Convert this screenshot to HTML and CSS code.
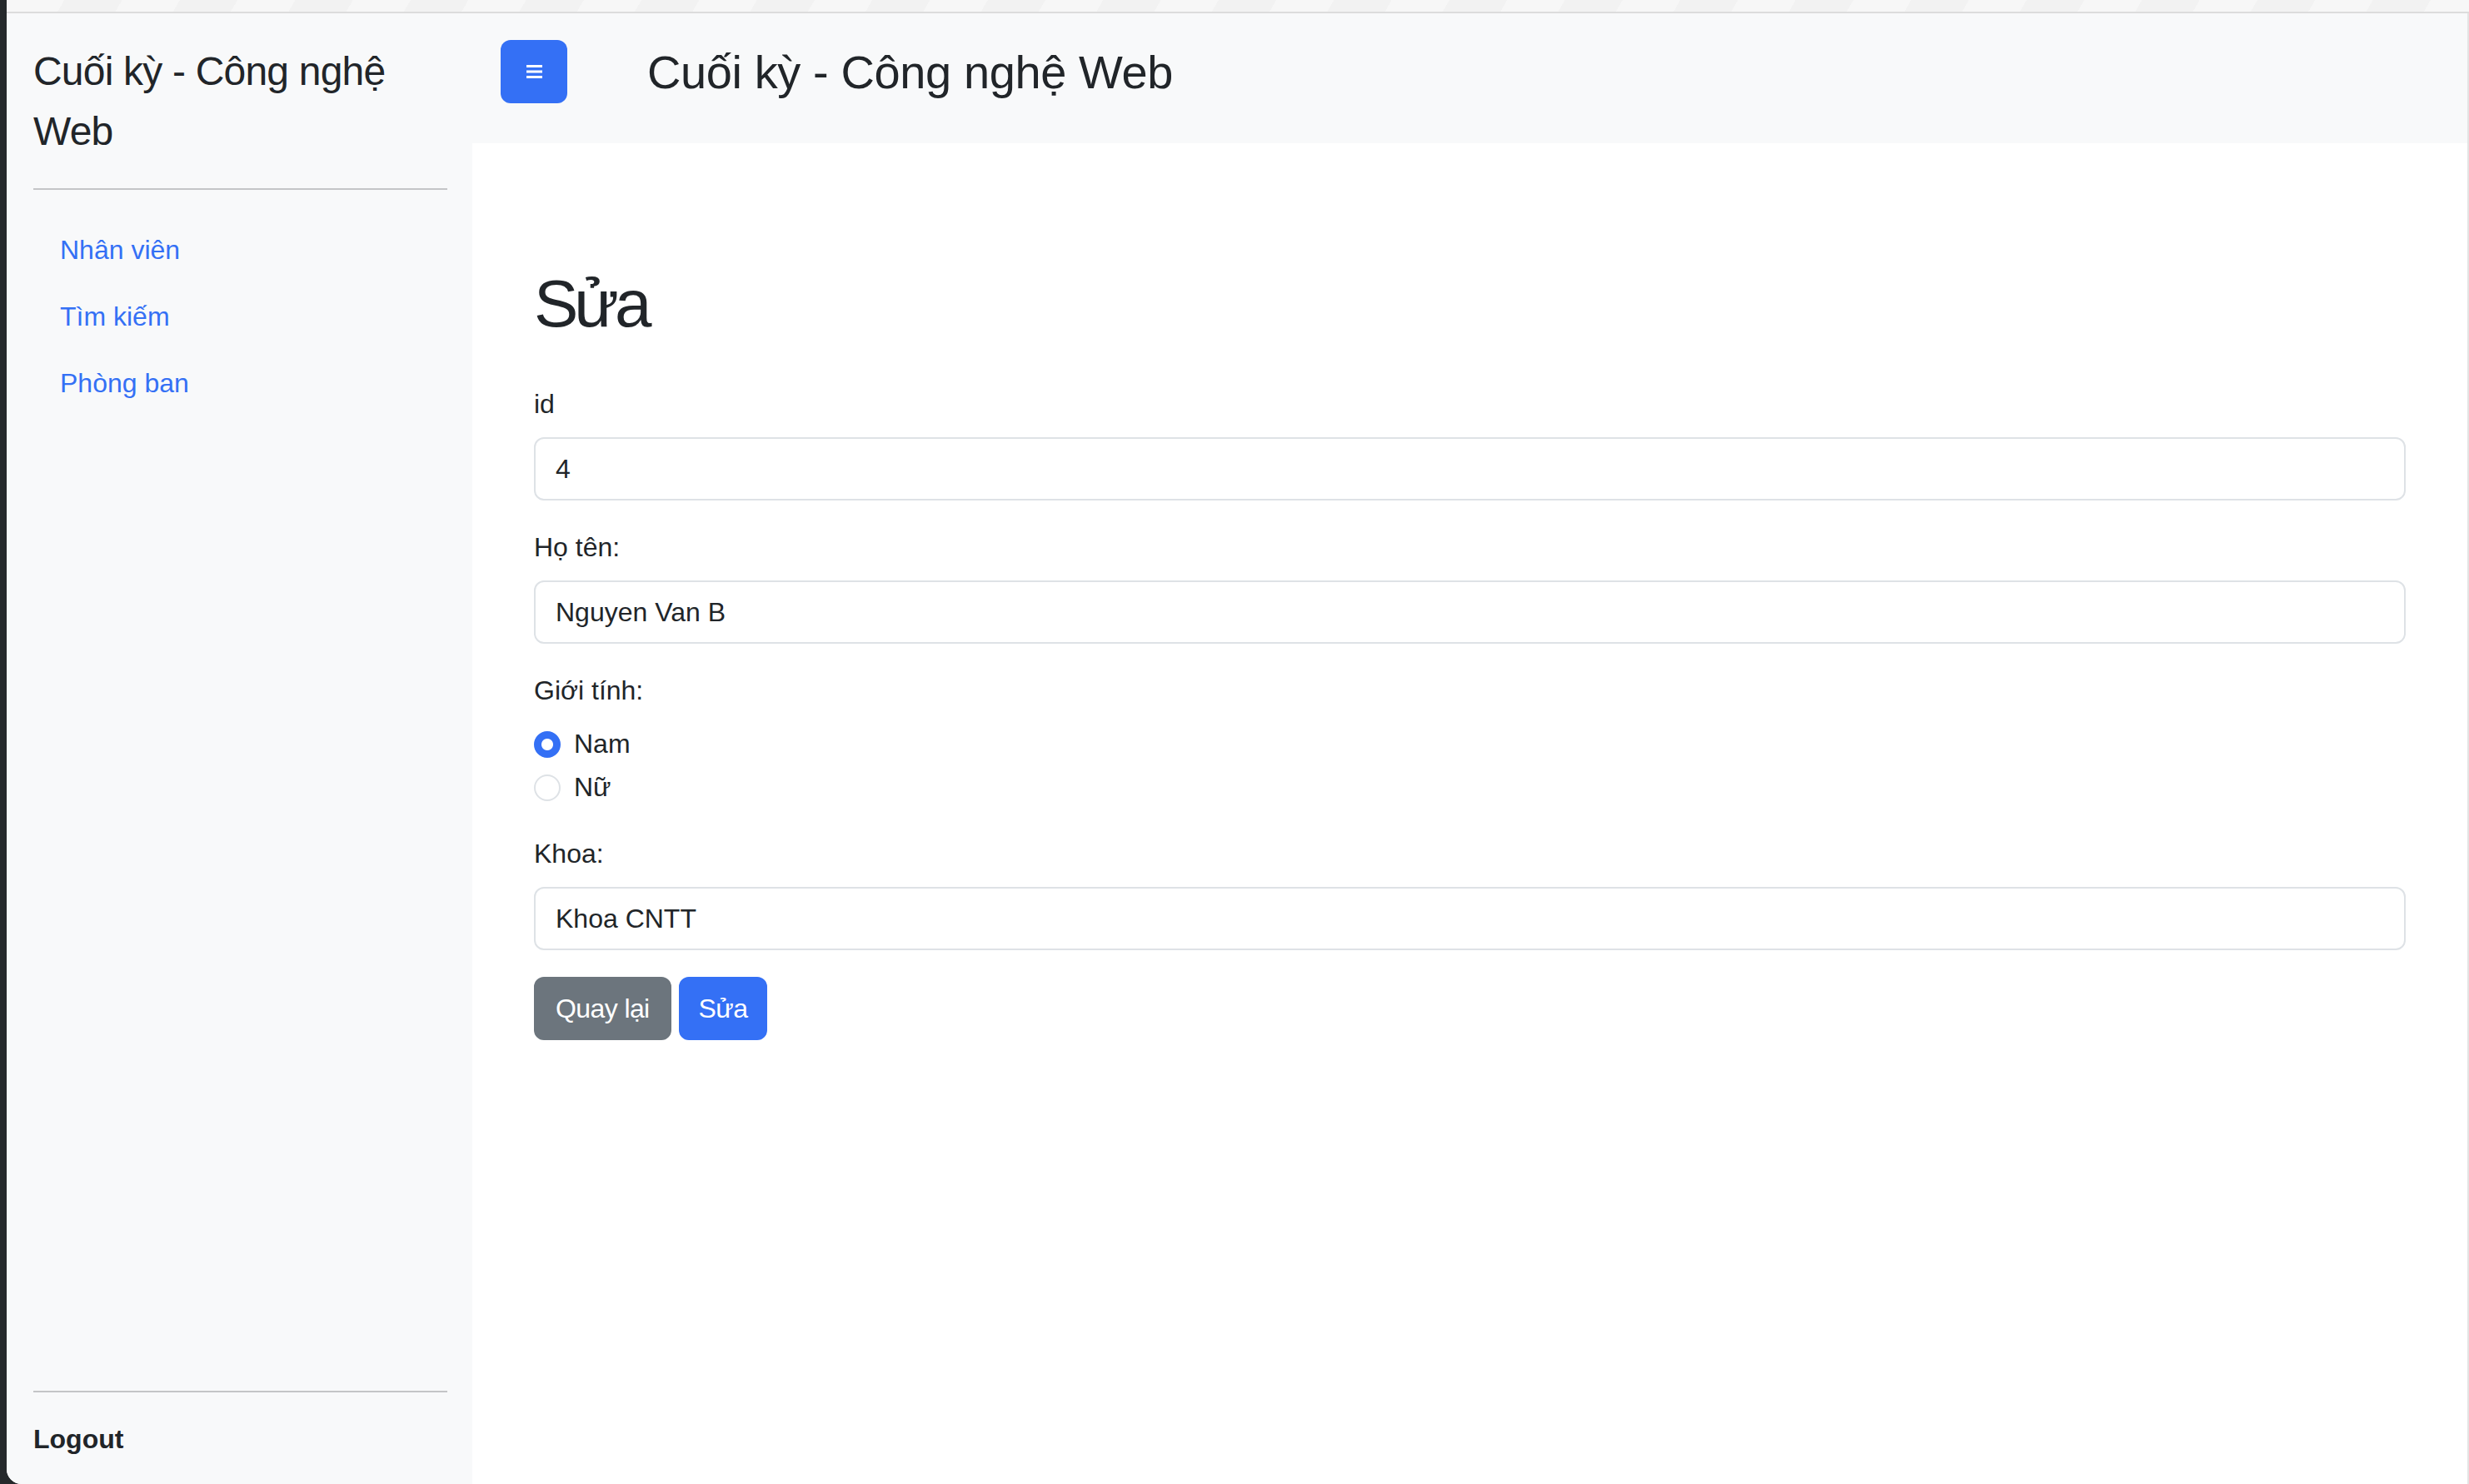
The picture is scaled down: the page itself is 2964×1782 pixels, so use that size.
FILE: index.html
```html
<!DOCTYPE html>
<html lang="vi">
<head>
<meta charset="utf-8">
<title>Cuối kỳ - Công nghệ Web</title>
<link rel="stylesheet" href="styles.css">
</head>
<body>
<div class="frame">
  <div class="titlebar"></div>
  <div class="app">
    <aside class="sidebar">
      <a class="brand" href="#">Cuối kỳ - Công nghệ Web</a>
      <hr class="divider">
      <nav class="nav">
        <a class="nav-link" href="#">Nhân viên</a>
        <a class="nav-link" href="#">Tìm kiếm</a>
        <a class="nav-link" href="#">Phòng ban</a>
      </nav>
      <div class="sidebar-foot">
        <hr class="divider">
        <a class="logout" href="#">Logout</a>
      </div>
    </aside>
    <main class="main">
      <header class="topbar">
        <button class="menu-btn" type="button" aria-label="Menu">
          <svg class="menu-icon" width="19" height="16" viewBox="0 0 19 16">
            <rect x="0" y="0" width="19" height="3" fill="#fff"/>
            <rect x="0" y="6.5" width="19" height="3" fill="#fff"/>
            <rect x="0" y="13" width="19" height="3" fill="#fff"/>
          </svg>
        </button>
        <h3 class="topbar-title">Cuối kỳ - Công nghệ Web</h3>
      </header>
      <section class="content">
        <h1 class="page-title">Sửa</h1>
        <form class="form">
          <div class="field">
            <label class="label" for="f-id">id</label>
            <input class="input" id="f-id" type="text" value="4">
          </div>
          <div class="field">
            <label class="label" for="f-name">Họ tên:</label>
            <input class="input" id="f-name" type="text" value="Nguyen Van B">
          </div>
          <div class="field">
            <label class="label">Giới tính:</label>
            <div class="check">
              <input class="radio" type="radio" name="gt" id="gt-nam" checked>
              <label class="check-label" for="gt-nam">Nam</label>
            </div>
            <div class="check">
              <input class="radio" type="radio" name="gt" id="gt-nu">
              <label class="check-label" for="gt-nu">Nữ</label>
            </div>
          </div>
          <div class="field">
            <label class="label" for="f-khoa">Khoa:</label>
            <input class="input" id="f-khoa" type="text" value="Khoa CNTT">
          </div>
          <div class="actions">
            <a class="btn btn-secondary" href="#">Quay lại</a>
            <button class="btn btn-primary" type="submit">Sửa</button>
          </div>
        </form>
      </section>
    </main>
  </div>
</div>
</body>
</html>
```
FILE: styles.css
```css
* { box-sizing: border-box; }

html, body {
  margin: 0;
  height: 100%;
}

body {
  background: #25292b;
  font-family: "Liberation Sans", "Noto Sans", "DejaVu Sans", sans-serif;
  font-size: 32px;
  line-height: 48px;
  color: #212529;
  overflow: hidden;
}

.frame {
  margin-left: 8px;
  height: 1782px;
  display: flex;
  flex-direction: column;
  border-bottom-left-radius: 18px;
  overflow: hidden;
  background: #fff;
}

.titlebar {
  height: 16px;
  flex: none;
  background: repeating-linear-gradient(120deg, #f7f7f7 0 60px, #f2f2f2 60px 120px);
  border-bottom: 2px solid #dcdcdc;
}

.app {
  flex: 1;
  display: flex;
  border-right: 2px solid #e3e3e3;
  min-height: 0;
}

/* Sidebar */
.sidebar {
  width: 559px;
  flex: none;
  background: #f8f9fa;
  padding: 34px 30px 30px 32px;
  display: flex;
  flex-direction: column;
}

.brand {
  font-size: 48px;
  line-height: 72px;
  color: #212529;
  text-decoration: none;
  letter-spacing: -0.8px;
}

.divider {
  margin: 32px 0;
  border: 0;
  border-top: 2px solid #c4c5c7;
  height: 0;
}

.nav {
  display: flex;
  flex-direction: column;
}

.nav-link {
  padding: 16px 32px;
  color: #3470f5;
  text-decoration: none;
}

.sidebar-foot {
  margin-top: auto;
}

.sidebar-foot .divider {
  margin-top: 0;
}

.logout {
  color: #212529;
  font-weight: 700;
  text-decoration: none;
}

/* Main */
.main {
  flex: 1;
  display: flex;
  flex-direction: column;
  min-width: 0;
}

.topbar {
  height: 156px;
  flex: none;
  background: #f8f9fa;
  padding: 32px 34px 0 34px;
  display: flex;
  align-items: flex-start;
}

.menu-btn {
  width: 80px;
  height: 76px;
  border: 0;
  border-radius: 12px;
  background: #3470f5;
  display: flex;
  align-items: center;
  justify-content: center;
  padding: 0;
}

.menu-icon {
  display: block;
  margin-left: 1px;
}

.topbar-title {
  margin: 5px 0 0 96px;
  font-size: 56px;
  line-height: 67px;
  font-weight: 400;
  letter-spacing: -0.4px;
}

.content {
  flex: 1;
  background: #fff;
  padding: 145px 74px 0 74px;
}

.page-title {
  margin: 0 0 48px;
  font-size: 80px;
  line-height: 96px;
  font-weight: 400;
  letter-spacing: -5px;
}

.field {
  margin-bottom: 32px;
}

.label {
  display: block;
  margin-bottom: 16px;
}

.input {
  display: block;
  width: 100%;
  height: 76px;
  padding: 12px 24px;
  border: 2px solid #dee2e6;
  border-radius: 12px;
  background: #fff;
  font: inherit;
  color: #212529;
  outline: none;
}

.check {
  display: block;
  min-height: 48px;
  padding-left: 48px;
  margin-bottom: 4px;
}

.radio {
  appearance: none;
  -webkit-appearance: none;
  float: left;
  width: 32px;
  height: 32px;
  margin: 9px 0 0 -48px;
  border: 2px solid #dee2e6;
  border-radius: 50%;
  background: #fff;
}

.radio:checked {
  border-color: #3470f5;
  background: radial-gradient(circle, #fff 0 6.5px, #3470f5 7.5px);
}

.check-label {
  display: inline-block;
}

.actions {
  display: flex;
  gap: 9px;
}

.btn {
  display: inline-block;
  height: 76px;
  padding: 12px 24px;
  border: 2px solid transparent;
  border-radius: 12px;
  font: inherit;
  color: #fff;
  text-decoration: none;
  cursor: pointer;
  letter-spacing: -0.6px;
}

.btn-secondary {
  background: #6c757d;
  border-color: #6c757d;
}

.btn-primary {
  background: #3470f5;
  border-color: #3470f5;
  padding: 12px 22px;
}
```
